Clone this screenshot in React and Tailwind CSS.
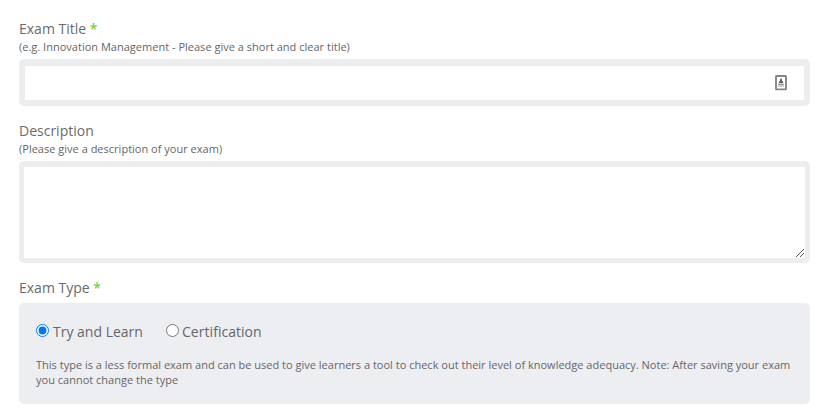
function Label({ children, required }) {
  return (
    <div className="h-[18px] text-[14px] leading-[18px] text-[#6a6a6c]">
      {children}
      {required && <span className="text-[#7ed03c] font-semibold"> *</span>}
    </div>
  );
}

export default function App() {
  return (
    <form className="w-[826px] h-[416px] bg-white pl-[19px] pt-[20px] font-['Open_Sans',sans-serif] text-[#666668]">
      <Label required>Exam Title</Label>
      <div className="text-[11px] leading-[18px] h-[21px] tracking-[0.012px]">(e.g. Innovation Management - Please give a short and clear title)</div>
      <div className="w-[791px] h-[47px] rounded-[5px] bg-[#ebedee] px-[6px] pt-[7px] pb-[6px]">
        <div className="bg-white h-full flex items-center pr-[17px]">
          <input type="text" className="flex-1 h-full px-2 text-[14px] outline-none" />
          <svg width="12" height="16" viewBox="0 0 12 16" fill="none">
            <rect x="1" y="1" width="10" height="13.4" rx="0.6" stroke="#858585" strokeWidth="1.9" />
            <path d="M6 3L7 4.6V6H8V8H4V6H5V4.6Z" fill="#666" />
            <path d="M3.2 9.5h5.6" stroke="#999" strokeWidth="2" />
            <path d="M3.2 11.5h5.6" stroke="#ccc" strokeWidth="1" />
          </svg>
        </div>
      </div>
      <div className="h-[16px]" />
      <Label>Description</Label>
      <div className="text-[11px] leading-[18px] h-[21px] tracking-[0.012px]">(Please give a description of your exam)</div>
      <div className="w-[791px] h-[102px] rounded-[5px] bg-[#ecedee] pl-[5px] pr-[5px] pt-[6px] pb-[5px] flex">
        <div className="bg-white flex-1 flex items-end pr-px pb-px">
          <textarea className="flex-1 h-full p-2 text-[14px] resize-none outline-none" />
          <svg width="8" height="8" viewBox="0 0 8 8" shapeRendering="crispEdges" stroke="#555" fill="none"><path d="M0 8L8 0M4 8L8 4" /></svg>
        </div>
      </div>
      <div className="h-[16px]" />
      <Label required>Exam Type</Label>
      <div className="mt-[6px] w-[791px] h-[101px] rounded-[5px] bg-[#edeef2] pl-[17px] pt-[18px]">
        <div className="flex items-start h-[20px] text-[14px] leading-[22px]">
          <input type="radio" name="type" defaultChecked className="w-[13px] h-[13px] mt-[3px] mr-[4px] accent-[#0075ff]" />
          <span className="w-[113px]">Try and Learn</span>
          <input type="radio" name="type" className="w-[13px] h-[13px] mt-[3px] mr-[3px]" />
          <span className="tracking-[0.04px]">Certification</span>
        </div>
        <p className="mt-[16px] text-[11px] leading-[15px] tracking-[0.006px] whitespace-nowrap">
          This type is a less formal exam and can be used to give learners a tool to check out their level of knowledge adequacy. Note: After saving your exam<br />you cannot change the type
        </p>
      </div>
    </form>
  );
}
